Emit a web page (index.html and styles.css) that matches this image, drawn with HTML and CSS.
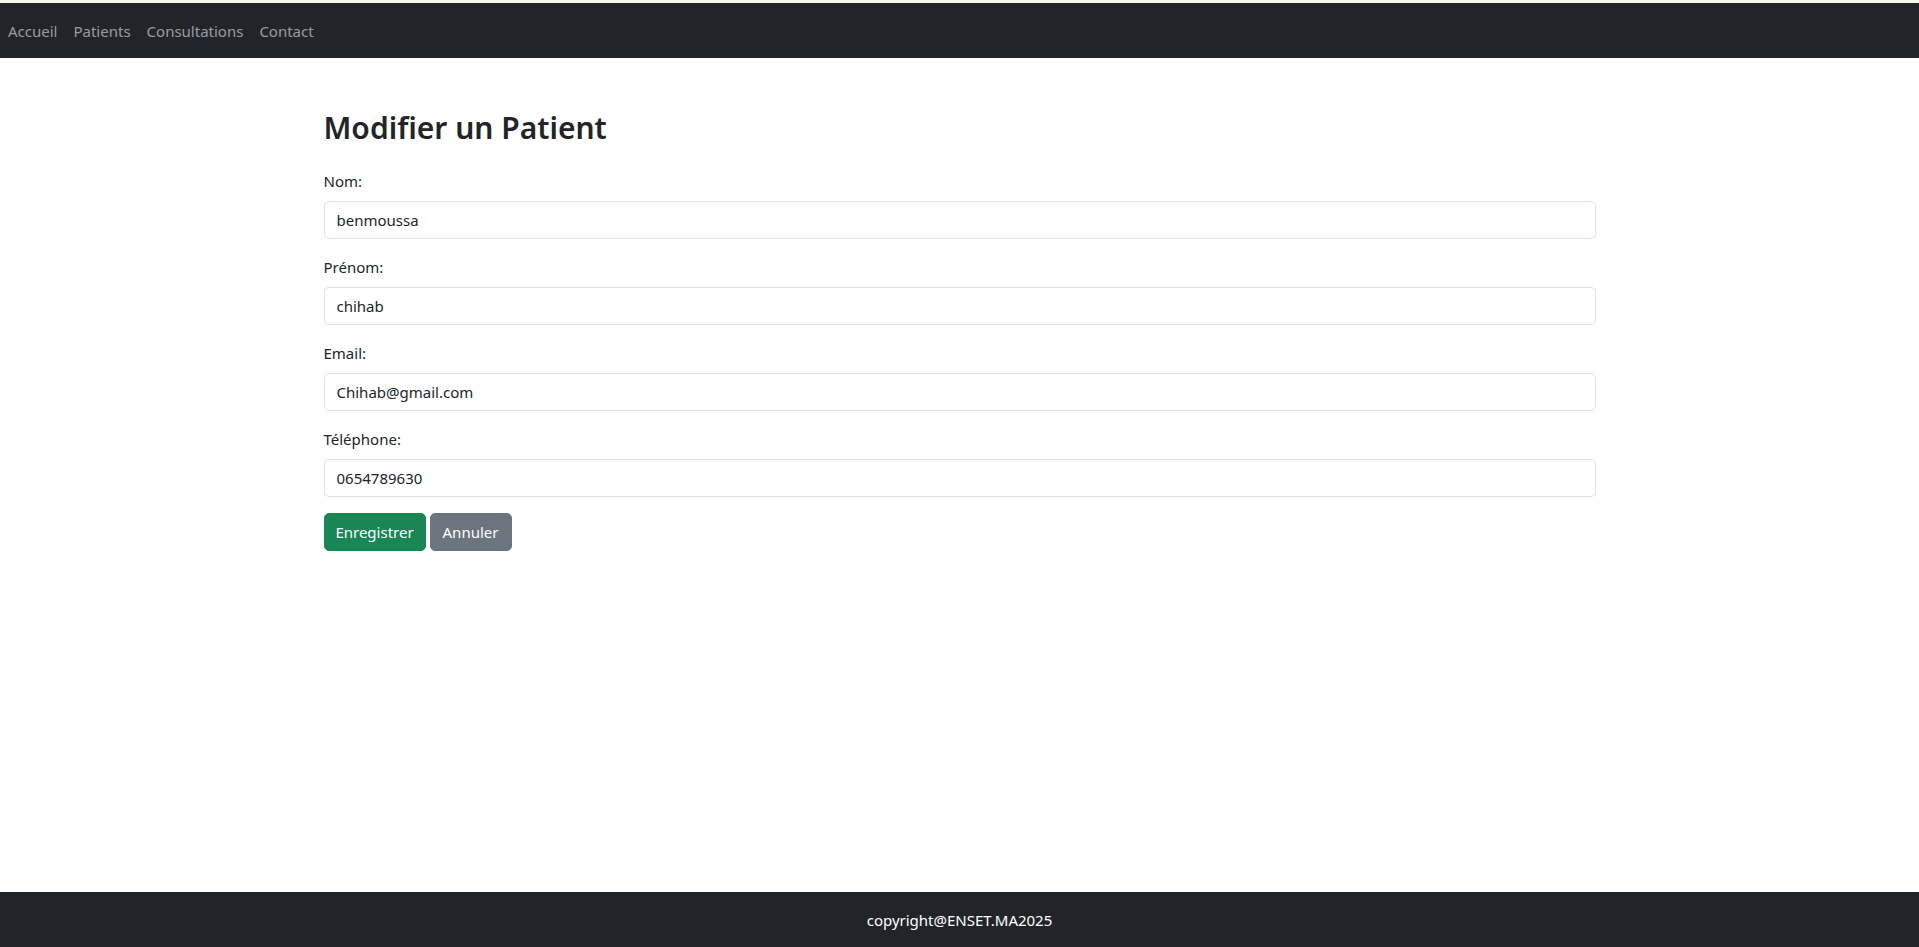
FILE: index.html
```html
<!DOCTYPE html>
<html lang="fr">
<head>
<meta charset="utf-8">
<title>Modifier un Patient</title>
<link rel="stylesheet" href="styles.css">
</head>
<body>
<div class="topline"></div>
<nav class="navbar">
  <a class="nav-link" href="#">Accueil</a>
  <a class="nav-link" href="#">Patients</a>
  <a class="nav-link" href="#">Consultations</a>
  <a class="nav-link" href="#">Contact</a>
</nav>
<main class="main">
  <div class="container">
    <h2 class="title">Modifier un Patient</h2>
    <form class="form">
      <div class="group">
        <label class="label" for="nom">Nom:</label>
        <input class="input" id="nom" type="text" value="benmoussa">
      </div>
      <div class="group">
        <label class="label" for="prenom">Prénom:</label>
        <input class="input" id="prenom" type="text" value="chihab">
      </div>
      <div class="group">
        <label class="label" for="email">Email:</label>
        <input class="input" id="email" type="text" value="Chihab@gmail.com">
      </div>
      <div class="group">
        <label class="label" for="tel">Téléphone:</label>
        <input class="input" id="tel" type="text" value="0654789630">
      </div>
      <div class="actions">
        <button type="button" class="btn btn-success">Enregistrer</button>
        <a href="#" class="btn btn-secondary">Annuler</a>
      </div>
    </form>
  </div>
</main>
<footer class="footer">copyright@ENSET.MA2025</footer>
</body>
</html>
```
FILE: styles.css
```css
* { box-sizing: border-box; }
html, body { height: 100%; }
body {
  margin: 0;
  font-family: "Noto Sans", "Open Sans", sans-serif;
  font-size: 15px;
  line-height: 24px;
  color: #212529;
  background: #fff;
  display: flex;
  flex-direction: column;
  min-height: 100vh;
}
.topline { height: 3px; background: #f6f7ec; flex: none; }
.navbar {
  flex: none;
  height: 55px;
  background: #212529;
  display: flex;
  align-items: center;
  padding: 0;
}
.nav-link {
  color: rgba(255,255,255,0.55);
  text-decoration: none;
  padding: 0 8px;
  line-height: 24px;
}
.main { flex: 1; padding-top: 50px; }
.container { width: 1272px; margin: 0 auto; }
.title {
  margin: 0 0 21px;
  font-size: 30px;
  line-height: 40px;
  font-weight: 600;
  color: #212529;
}
.group { margin-bottom: 16px; }
.label { display: block; margin-bottom: 8px; line-height: 24px; }
.input {
  display: block;
  width: 100%;
  height: 38px;
  padding: 6px 12px;
  font-family: inherit;
  font-size: 15px;
  line-height: 24px;
  color: #212529;
  background: #fff;
  border: 1px solid #dee2e6;
  border-radius: 5px;
  outline: none;
}
.actions { display: flex; gap: 4px; }
.btn {
  display: inline-flex;
  align-items: center;
  justify-content: center;
  height: 38px;
  padding: 0 12px;
  font-family: inherit;
  font-size: 15px;
  line-height: 24px;
  color: #fff;
  border: 1px solid transparent;
  border-radius: 5px;
  text-decoration: none;
  cursor: pointer;
}
.btn-success { background: #198754; border-color: #198754; width: 102px; }
.btn-secondary { background: #6c757d; border-color: #6c757d; width: 82px; }
.footer {
  flex: none;
  height: 55px;
  background: #212529;
  color: #fff;
  display: flex;
  align-items: center;
  justify-content: center;
}
```
